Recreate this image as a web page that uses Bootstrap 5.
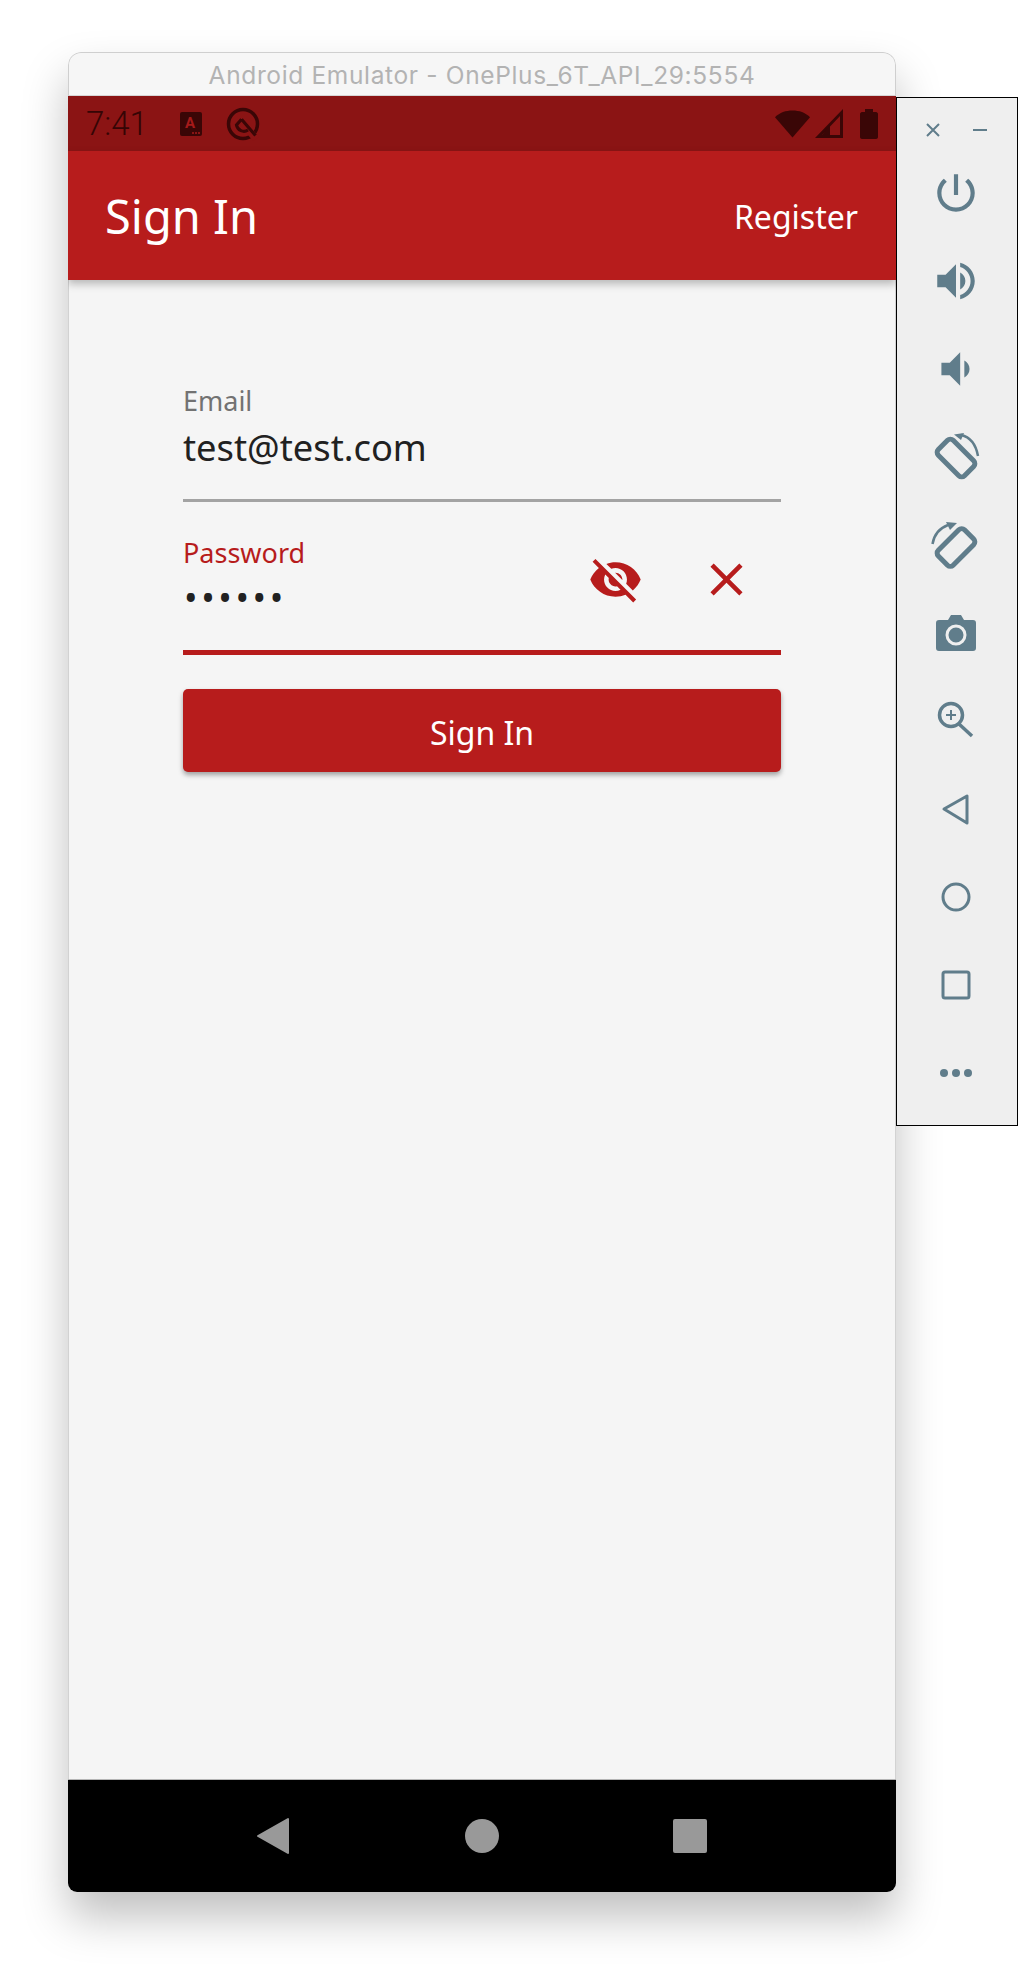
<!DOCTYPE html>
<html lang="en">
<head>
    <meta charset="UTF-8">
    <meta name="viewport" content="width=device-width, initial-scale=1.0">
    <title>Sign In</title>
    <link href="https://cdn.jsdelivr.net/npm/bootstrap@5.3.0/dist/css/bootstrap.min.css" rel="stylesheet">
    <style>
        body {
            background-color: #fff;
            min-height: 1976px;
            padding: 52px 0 0 68px;
            font-family: "Noto Sans", sans-serif;
        }
        .emu-window {
            width: 828px;
            height: 1840px;
            border-radius: 13px 13px 9px 9px;
            box-shadow: 0 25px 45px rgba(0, 0, 0, 0.25);
            overflow: hidden;
        }
        .title-strip {
            height: 44px;
            background-color: #f6f6f6;
            border: 1px solid #cfcfcf;
            border-bottom-color: #d6d6d6;
            border-radius: 13px 13px 0 0;
            color: #b3b3b3;
            font-family: Inter, sans-serif;
            font-size: 24.5px;
            letter-spacing: 0.65px;
            line-height: 44px;
        }
        .status-strip {
            height: 55px;
            background-color: #8b1414;
            padding: 0 18px 0 18px;
        }
        .status-time {
            color: #350505;
            font-family: Roboto, sans-serif;
            font-weight: 300;
            font-size: 33px;
            width: 94px;
        }
        .app-strip {
            height: 129px;
            background-color: #b71c1c;
            padding: 2px 38px 0 37px;
            box-shadow: 0 4px 8px rgba(0, 0, 0, 0.25);
            position: relative;
        }
        .app-title {
            color: #fff;
            font-size: 47px;
            line-height: 1;
        }
        .btn-register {
            color: #fff;
            font-size: 32px;
            padding: 0;
            border: 0;
        }
        .form-area {
            background-color: #f5f5f5;
            padding: 105px 114px 0 114px;
            border-left: 1px solid #d2d2d2;
            border-right: 1px solid #d2d2d2;
        }
        .field-box {
            height: 117px;
            border-bottom: 3px solid #a3a3a3;
        }
        .field-box.is-active {
            height: 153px;
            padding-top: 35px;
            border-bottom: 5px solid #b71c1c;
        }
        .field-label {
            display: block;
            color: #727272;
            font-size: 27px;
            line-height: 32px;
            margin: 0;
        }
        .is-active .field-label {
            color: #b71c1c;
        }
        .form-control.field-input {
            background: transparent;
            border: 0;
            border-radius: 0;
            box-shadow: none;
            padding: 0;
            margin-top: 7px;
            color: #212121;
            font-size: 36.3px;
            line-height: 46px;
            height: 46px;
        }
        .form-control.field-input[type="password"] {
            margin-top: 6px;
            letter-spacing: 3.6px;
            font-size: 36px;
            padding-left: 1px;
        }
        .icon-plain {
            background: none;
            border: 0;
            padding: 0;
            line-height: 0;
        }
        .field-actions {
            right: 27px;
            top: 50px;
            gap: 56px;
        }
        .battery-gap {
            margin-left: 12px;
        }
        .btn-signin {
            background-color: #b71c1c;
            color: #fff;
            height: 83px;
            margin-top: 34px;
            padding-top: 10px;
            font-size: 32px;
            border: 0;
            border-radius: 5px;
            box-shadow: 0 3px 5px rgba(0, 0, 0, 0.35);
        }
        .btn-signin:hover {
            background-color: #b71c1c;
            color: #fff;
        }
        .nav-strip {
            height: 113px;
            background-color: #000;
            gap: 158px;
            border-top: 1px solid #b5b5b5;
        }
        .tool-panel {
            width: 122px;
            height: 1029px;
            margin-top: 45px;
            background-color: #efefef;
            border: 1px solid #000;
            color: #607d8b;
        }
        .tool-panel svg {
            fill: currentColor;
        }
        .tool-top {
            height: 51px;
            padding: 13px 29px 0 28px;
        }
        .tool-list {
            padding-right: 2px;
        }
        .tool-slot {
            height: 88px;
        }
    </style>
</head>
<body class="d-flex align-items-start">
    <div class="emu-window d-flex flex-column flex-shrink-0">
        <div class="title-strip text-center">Android Emulator - OnePlus_6T_API_29:5554</div>

        <div class="status-strip d-flex align-items-center">
            <span class="status-time">7:41</span>
            <svg width="22" height="24" viewBox="0 0 22 24" class="me-4">
                <rect width="22" height="24" rx="2" fill="#3a0606"/>
                <text x="10" y="16" text-anchor="middle" font-family="Roboto, sans-serif" font-weight="700" font-size="15" fill="#a51a1a">A</text>
                <circle cx="13" cy="21" r="1" fill="#a51a1a"/><circle cx="16" cy="21" r="1" fill="#a51a1a"/><circle cx="19" cy="21" r="1" fill="#a51a1a"/>
            </svg>
            <svg width="34" height="34" viewBox="0 0 34 34">
                <g fill="none">
                    <circle cx="17" cy="17" r="14.5" stroke="#3a0606" stroke-width="3.5"/>
                    <path stroke="#8b1414" stroke-width="7" d="M24 25l6 7"/>
                    <path stroke="#3a0606" stroke-width="3.2" d="M15.5 12.3L29.5 28.5M15.5 12.3L10.5 18A7.5 7.5 0 0 0 22 23"/>
                </g>
            </svg>
            <div class="ms-auto d-flex align-items-center gap-1">
                <svg width="35" height="28" viewBox="0 0 36 28"><path fill="#3a0606" d="M0 7C5 2 11 0 18 0s13 2 18 7L18 28z"/></svg>
                <svg width="30" height="30" viewBox="0 0 30 30"><path fill="#3a0606" fill-rule="evenodd" d="M29 0v29H1zM26 7L8 26h18z"/><path fill="#3a0606" d="M16 16v10H8z"/></svg>
                <svg width="18" height="30" viewBox="0 0 18 30" class="battery-gap"><path fill="#3a0606" d="M5 0h8v3h3c1 0 2 1 2 2v23c0 1-1 2-2 2H2c-1 0-2-1-2-2V5c0-1 1-2 2-2h3z"/></svg>
            </div>
        </div>

        <div class="app-strip d-flex align-items-center justify-content-between">
            <span class="app-title">Sign In</span>
            <button type="button" class="btn btn-register">Register</button>
        </div>

        <form class="form-area flex-grow-1">
            <div class="field-box">
                <label class="field-label" for="email">Email</label>
                <input class="form-control field-input" id="email" type="email" value="test@test.com">
            </div>
            <div class="field-box is-active position-relative">
                <label class="field-label" for="password">Password</label>
                <input class="form-control field-input" id="password" type="password" value="secret">
                <div class="field-actions position-absolute d-flex align-items-center">
                    <button type="button" class="icon-plain">
                        <svg width="55" height="55" viewBox="0 0 24 24" fill="#b71c1c"><path d="M12 7c2.76 0 5 2.24 5 5 0 .65-.13 1.26-.36 1.83l2.92 2.92c1.51-1.26 2.7-2.89 3.43-4.75-1.73-4.39-6-7.5-11-7.5-1.4 0-2.74.25-3.98.7l2.16 2.16C10.74 7.13 11.35 7 12 7zM2 4.27l2.28 2.28.46.46C3.08 8.3 1.78 10.02 1 12c1.73 4.39 6 7.5 11 7.5 1.55 0 3.03-.3 4.38-.84l.42.42L19.73 22 21 20.73 3.27 3 2 4.27zM7.53 9.8l1.55 1.55c-.05.21-.08.43-.08.65 0 1.66 1.34 3 3 3 .22 0 .44-.03.65-.08l1.55 1.55c-.67.33-1.41.53-2.2.53-2.76 0-5-2.24-5-5 0-.79.2-1.53.53-2.2zm4.31-.78l3.15 3.15.02-.16c0-1.66-1.34-3-3-3l-.17.01z"/></svg>
                    </button>
                    <button type="button" class="icon-plain">
                        <svg width="55" height="55" viewBox="0 0 24 24" fill="#b71c1c"><path d="M19 6.41L17.59 5 12 10.59 6.41 5 5 6.41 10.59 12 5 17.59 6.41 19 12 13.41 17.59 19 19 17.59 13.41 12z"/></svg>
                    </button>
                </div>
            </div>
            <button type="button" class="btn btn-signin w-100">Sign In</button>
        </form>

        <div class="nav-strip d-flex align-items-center justify-content-center">
            <svg width="50" height="50" viewBox="0 0 50 50"><path fill="#999" stroke="#999" stroke-width="2" stroke-linejoin="round" d="M9 25L39 8v34z"/></svg>
            <svg width="50" height="50" viewBox="0 0 50 50"><circle cx="25" cy="25" r="17" fill="#999"/></svg>
            <svg width="50" height="50" viewBox="0 0 50 50"><rect x="8" y="8" width="34" height="34" rx="2" fill="#999"/></svg>
        </div>
    </div>

    <div class="tool-panel flex-shrink-0">
        <div class="tool-top d-flex justify-content-between align-items-center">
            <svg width="16" height="16" viewBox="0 0 16 16"><path fill="none" stroke="currentColor" stroke-width="2" d="M2 2l12 12M14 2L2 14"/></svg>
            <svg width="16" height="16" viewBox="0 0 16 16"><path fill="none" stroke="currentColor" stroke-width="2" d="M1 8h14"/></svg>
        </div>
        <div class="tool-list d-flex flex-column align-items-center">
            <div class="tool-slot d-flex align-items-center">
                <svg width="50" height="50" viewBox="0 0 24 24"><path d="M13 3h-2v10h2V3zm4.83 2.17l-1.42 1.42C17.99 7.86 19 9.81 19 12c0 3.87-3.13 7-7 7s-7-3.13-7-7c0-2.19 1.01-4.14 2.58-5.42L6.17 5.17C4.23 6.82 3 9.26 3 12c0 4.97 4.03 9 9 9s9-4.03 9-9c0-2.74-1.23-5.18-3.17-6.83z"/></svg>
            </div>
            <div class="tool-slot d-flex align-items-center">
                <svg width="50" height="50" viewBox="0 0 24 24"><path d="M3 9v6h4l5 5V4L7 9H3zm13.5 3c0-1.77-1.02-3.29-2.5-4.03v8.05c1.48-.73 2.5-2.25 2.5-4.02zM14 3.23v2.06c2.89.86 5 3.54 5 6.71s-2.11 5.85-5 6.71v2.06c4.01-.91 7-4.49 7-8.77s-2.99-7.86-7-8.77z"/></svg>
            </div>
            <div class="tool-slot d-flex align-items-center">
                <svg width="50" height="50" viewBox="0 0 24 24"><path d="M18.5 12c0-1.77-1.02-3.29-2.5-4.03v8.05c1.48-.73 2.5-2.25 2.5-4.02zM5 9v6h4l5 5V4L9 9H5z"/></svg>
            </div>
            <div class="tool-slot d-flex align-items-center">
                <svg width="64" height="64" viewBox="0 0 64 64">
                    <rect x="21.5" y="14.5" width="21" height="37" rx="4" transform="rotate(-45 32 33)" fill="none" stroke="currentColor" stroke-width="5"/>
                    <path fill="none" stroke="currentColor" stroke-width="2.5" d="M37 10C46 12 52 20 54 31"/>
                    <path d="M30 9.5L40 8l-3 7z"/>
                </svg>
            </div>
            <div class="tool-slot d-flex align-items-center">
                <svg width="64" height="64" viewBox="0 0 64 64">
                    <rect x="21.5" y="16" width="21" height="37" rx="4" transform="rotate(45 32 34.5)" fill="none" stroke="currentColor" stroke-width="5"/>
                    <path fill="none" stroke="currentColor" stroke-width="2.5" d="M8.5 31C10 22 16 15 24 12"/>
                    <path d="M33 10L22 9l4 8z"/>
                </svg>
            </div>
            <div class="tool-slot d-flex align-items-center">
                <svg width="50" height="50" viewBox="0 0 50 50">
                    <path d="M8 12h9l3-5h10l3 5h9c2 0 3 1 3 3v25c0 2-1 3-3 3H8c-2 0-3-1-3-3V15c0-2 1-3 3-3z"/>
                    <circle cx="25" cy="27" r="9" fill="none" stroke="#efefef" stroke-width="3"/>
                </svg>
            </div>
            <div class="tool-slot d-flex align-items-center">
                <svg width="50" height="50" viewBox="0 0 50 50">
                    <circle cx="20" cy="19" r="11.5" fill="none" stroke="currentColor" stroke-width="3.5"/>
                    <path fill="none" stroke="currentColor" stroke-width="2" d="M15 19h10M20 14v10"/>
                    <path fill="none" stroke="currentColor" stroke-width="3.5" d="M28 28l13 12"/>
                </svg>
            </div>
            <div class="tool-slot d-flex align-items-center">
                <svg width="50" height="50" viewBox="0 0 50 50"><path fill="none" stroke="currentColor" stroke-width="3" stroke-linejoin="round" d="M13 25l23-13v27z"/></svg>
            </div>
            <div class="tool-slot d-flex align-items-center">
                <svg width="50" height="50" viewBox="0 0 50 50"><circle cx="25" cy="25" r="13" fill="none" stroke="currentColor" stroke-width="3"/></svg>
            </div>
            <div class="tool-slot d-flex align-items-center">
                <svg width="50" height="50" viewBox="0 0 50 50"><rect x="12" y="12" width="26" height="26" rx="2" fill="none" stroke="currentColor" stroke-width="3"/></svg>
            </div>
            <div class="tool-slot d-flex align-items-center">
                <svg width="50" height="50" viewBox="0 0 50 50"><circle cx="13" cy="25" r="4"/><circle cx="25" cy="25" r="4"/><circle cx="37" cy="25" r="4"/></svg>
            </div>
        </div>
    </div>

    <script src="https://cdn.jsdelivr.net/npm/bootstrap@5.3.0/dist/js/bootstrap.bundle.min.js"></script>
</body>
</html>
